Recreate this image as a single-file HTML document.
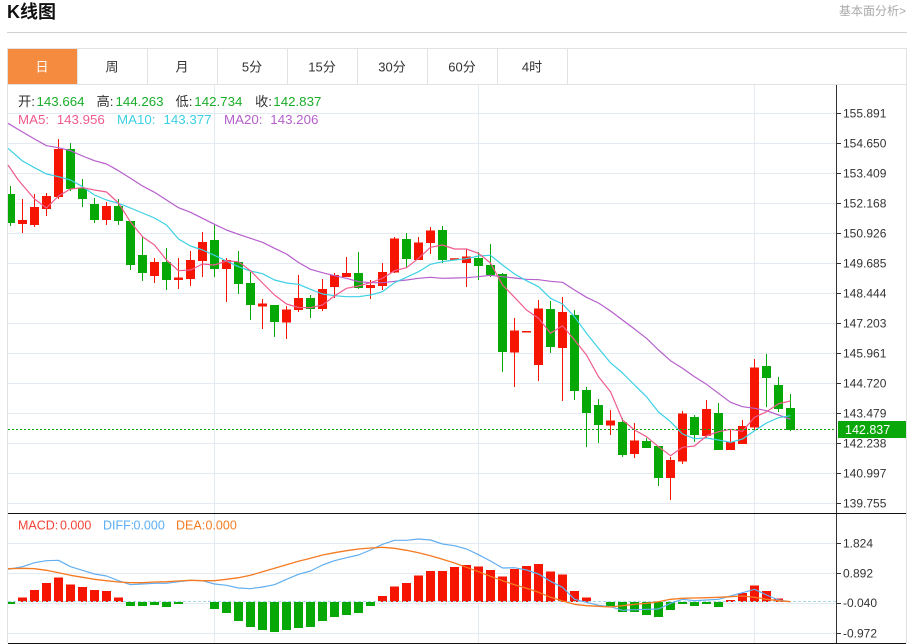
<!DOCTYPE html>
<html lang="zh">
<head>
<meta charset="utf-8">
<title>K线图</title>
<style>
html,body{margin:0;padding:0;background:#fff;width:913px;height:644px;overflow:hidden}
svg{display:block;font-family:"Liberation Sans","Noto Sans CJK SC",sans-serif}
</style>
</head>
<body>
<svg width="913" height="644" viewBox="0 0 913 644" xmlns="http://www.w3.org/2000/svg">
<!-- header -->
<text x="7" y="18" font-size="18" font-weight="700" fill="#111">K线图</text>
<text x="906" y="15" font-size="12" fill="#aaa" text-anchor="end">基本面分析&gt;</text>
<path d="M7 32.5H907" stroke="#d0d0d0" fill="none"/>
<!-- frame -->
<path d="M7.5 49V643M906.5 49V643M7 48.5H907M7 84.5H907" stroke="#e2e2e2" fill="none"/>
<rect x="8" y="49" width="69.5" height="35" fill="#f58b3f"/>
<path d="M77.5 49V84M147.5 49V84M217.5 49V84M287.5 49V84M357.5 49V84M427.5 49V84M497.5 49V84M567.5 49V84" stroke="#e2e2e2" fill="none"/>
<g font-size="13" text-anchor="middle" fill="#333">
<text x="42" y="71.500" fill="#fff">日</text>
<text x="112" y="71.500">周</text>
<text x="182" y="71.500">月</text>
<text x="252" y="71.500">5分</text>
<text x="322" y="71.500">15分</text>
<text x="392" y="71.500">30分</text>
<text x="462" y="71.500">60分</text>
<text x="532" y="71.500">4时</text>
</g>
<!-- grid -->
<path d="M8 113.5H836M8 143.5H836M8 173.5H836M8 203.5H836M8 233.5H836M8 263.5H836M8 293.5H836M8 323.5H836M8 353.5H836M8 383.5H836M8 413.5H836M8 443.5H836M8 473.5H836M8 503.5H836M8 543.5H836M8 573.5H836M8 603.5H836M8 633.5H836M214.5 85V643M478.5 85V643M754.5 85V643" stroke="#e3eaf2" fill="none"/>
<!-- candles green -->
<path d="M10.5 186V226M70.5 143V191M82.5 179V207M94.5 198V223M118.5 199V225M130.5 221V270M142.5 237V281M166.5 248V290M214.5 225V277M238.5 251V294M250.5 272V320M274.5 305V337M310.5 295V318M358.5 252V289M406.5 233V267M442.5 226V263M478.5 252V280M490.5 244V277M502.5 273V372M550.5 301V353M574.5 310V400M586.5 387V447M598.5 399V443M622.5 418V457M646.5 438V448M658.5 446V486M694.5 415V442M718.5 403V450M766.5 354V407M778.5 377V412M790.5 394V431" stroke="#06a806" fill="none"/>
<path fill="#06a806" d="M8 194h7v29h-7zM66 149h9v40h-9zM78 188h9v11h-9zM90 204h9v16h-9zM114 206h9v15h-9zM126 221h9v44h-9zM138 255h9v18h-9zM162 262h9v18h-9zM210 240h9v29h-9zM234 262h9v22h-9zM246 283h9v22h-9zM270 305h9v17h-9zM306 298h9v11h-9zM354 273h9v15h-9zM402 239h9v20h-9zM438 230h9v30h-9zM474 258h9v8h-9zM486 265h9v10h-9zM498 274h9v78h-9zM546 309h9v38h-9zM570 315h9v76h-9zM582 390h9v23h-9zM594 405h9v20h-9zM618 422h9v33h-9zM642 441h9v7h-9zM654 446h9v32h-9zM690 417h9v18h-9zM714 413h9v37h-9zM762 366h9v12h-9zM774 385h9v24h-9zM786 408h9v22h-9z"/>
<!-- candles red -->
<path d="M22.5 199V233M34.5 194V227M46.5 193V216M58.5 139V199M106.5 202V225M154.5 258V283M178.5 258V289M190.5 251V286M202.5 232V277M226.5 258V302M262.5 299V329M286.5 306V339M298.5 275V312M322.5 279V311M334.5 273V298M346.5 257V277M370.5 280V299M382.5 263V290M394.5 237V273M418.5 237V260M430.5 227V254M466.5 249V287M514.5 318V387M538.5 300V381M562.5 297V401M610.5 410V435M634.5 423V458M670.5 457V500M682.5 411V464M706.5 400V438M730.5 430V450M742.5 420V444M754.5 359V431" stroke="#f51500" fill="none"/>
<path fill="#f51500" d="M18 220h9v4h-9zM30 207h9v18h-9zM42 196h9v13h-9zM54 149h9v48h-9zM102 206h9v14h-9zM150 262h9v14h-9zM174 277.500h9v2.500h-9zM186 260h9v19h-9zM198 242h9v19h-9zM222 260h9v9h-9zM258 303.500h9v3h-9zM282 309.500h9v13h-9zM294 298h9v12h-9zM318 289h9v20h-9zM330 275h9v12h-9zM342 273h9v4h-9zM366 285h9v3h-9zM378 272h9v14h-9zM390 238.500h9v34h-9zM414 242.500h9v17.500h-9zM426 230.500h9v12.500h-9zM450 258.300h9v1.500h-9zM462 256.500h9v6.500h-9zM510 330.500h9v22h-9zM522 331h9v1.500h-9zM534 308.500h9v56.500h-9zM558 312h9v36h-9zM606 420.500h9v5h-9zM630 440.500h9v13.500h-9zM666 460h9v18h-9zM678 413.500h9v48h-9zM702 409h9v27h-9zM726 442h9v8h-9zM738 426h9v18h-9zM750 367.500h9v60h-9z"/>
<!-- moving averages -->
<g fill="none" stroke-width="1.200" stroke-linejoin="round">
<polyline stroke="#b65fcc" points="8,123.300 22.500,132 34.500,139 46.500,145.700 58.500,147.700 70.500,150.700 82.500,156 94.500,160.700 106.500,164 118.500,170.700 130.500,178.300 142.500,186 154.500,192.300 166.500,200 178.500,207.700 190.500,212.300 202.500,218.300 214.500,224.300 226.500,230 238.500,234.300 250.500,238.300 262.500,242.300 274.500,248.300 286.500,254 298.500,262.500 310.500,269.300 322.500,272.700 334.500,275.700 346.500,278.300 358.500,281.700 370.500,282.700 382.500,282.700 394.500,281.300 406.500,280 418.500,278.300 430.500,277.300 442.500,278.300 454.500,278 466.500,277.700 478.500,276.700 490.500,275.300 502.500,276.700 514.500,278 526.500,279.300 538.500,279.700 550.500,281.300 562.500,282.300 574.500,290 586.500,297.300 598.500,303 610.500,311 622.500,320 634.500,329 646.500,338.300 658.500,350 670.500,360.700 682.500,368.300 694.500,376.700 706.500,384.300 718.500,393.300 730.500,402.300 742.500,406.700 754.500,408.300 766.500,410.700 778.500,415 790.500,419.300"/>
<polyline stroke="#3cd0e4" points="8,148.300 22.500,161 34.500,167.700 46.500,174 58.500,176.700 70.500,180 82.500,186.700 94.500,195 106.500,200 118.500,203.300 130.500,208 142.500,213 154.500,218 166.500,225 178.500,239 190.500,246 202.500,250 214.500,255.300 226.500,261 238.500,266.700 250.500,271 262.500,273.700 274.500,280 286.500,283 298.500,284.300 310.500,289.300 322.500,294 334.500,295.700 346.500,296.700 358.500,296.700 370.500,295 382.500,291.700 394.500,282.700 406.500,277.300 418.500,271.700 430.500,264.300 442.500,261.700 454.500,260 466.500,258.700 478.500,256 490.500,255.300 502.500,265 514.500,274 526.500,280.700 538.500,286.700 550.500,298.300 562.500,304 574.500,316.700 586.500,333.300 598.500,348.300 610.500,362.700 622.500,373 634.500,385 646.500,396.700 658.500,412 670.500,421.700 682.500,434 694.500,438.700 706.500,438 718.500,440 730.500,442.300 742.500,439 754.500,430.700 766.500,423 778.500,417.700 790.500,415.700"/>
<polyline stroke="#ef5b8e" points="8,165 18.300,180 22.500,185 34.500,199 46.500,208 58.500,196 70.500,189 82.500,187.700 94.500,190 106.500,192 118.500,203 130.500,222 142.500,236.700 154.500,245 166.500,260 178.500,270.700 190.500,270 202.500,264 214.500,265 226.500,261 238.500,261.700 250.500,270.700 262.500,283 274.500,295 286.500,304 298.500,307.500 310.500,307.700 322.500,305 334.500,296 346.500,288.300 358.500,286 370.500,282.700 382.500,278.300 394.500,270.700 406.500,267.700 418.500,258.300 430.500,247.300 442.500,245 454.500,249 466.500,249 478.500,253.300 490.500,263 502.500,285 514.500,297.300 526.500,310 538.500,318.300 550.500,333.300 562.500,325.700 574.500,340 586.500,355 598.500,376.700 610.500,391.700 622.500,420 634.500,430 646.500,436.700 658.500,446.700 670.500,455.700 682.500,447.300 694.500,446 706.500,436 718.500,431.700 730.500,429.300 742.500,431.300 754.500,417.300 766.500,411.700 778.500,403.700 790.500,401"/>
</g>
<!-- last price -->
<path d="M8 429.500H836" stroke="#0aa70a" stroke-dasharray="2 2" fill="none"/>
<!-- MACD bars green -->
<path fill="#06a806" d="M8 602h7v2h-7zM126 602h9v4h-9zM138 602h9v4h-9zM150 602h9v3h-9zM162 602h9v5h-9zM174 602h9v2h-9zM210 602h9v7h-9zM222 602h9v11h-9zM234 602h9v19h-9zM246 602h9v25h-9zM258 602h9v28h-9zM270 602h9v30h-9zM282 602h9v28h-9zM294 602h9v26h-9zM306 602h9v25h-9zM318 602h9v19h-9zM330 602h9v15h-9zM342 602h9v13h-9zM354 602h9v11h-9zM366 602h9v4h-9zM606 602h9v4h-9zM618 602h9v10h-9zM630 602h9v10h-9zM642 602h9v13h-9zM654 602h9v15h-9zM666 602h9v8h-9zM678 602h9v2h-9zM690 602h9v4h-9zM702 602h9v2h-9zM714 602h9v5h-9z"/>
<!-- MACD bars red -->
<path fill="#f51500" d="M18 597.500h9v4.500h-9zM30 590h9v12h-9zM42 583h9v19h-9zM54 577.500h9v24.500h-9zM66 584.500h9v17.500h-9zM78 587h9v15h-9zM90 590h9v12h-9zM102 591h9v11h-9zM114 597.500h9v4.500h-9zM378 596h9v6h-9zM390 586.500h9v15.500h-9zM402 583h9v19h-9zM414 575.500h9v26.500h-9zM426 571h9v31h-9zM438 571h9v31h-9zM450 567h9v35h-9zM462 565h9v37h-9zM474 566.500h9v35.500h-9zM486 570h9v32h-9zM498 576.500h9v25.500h-9zM510 569h9v33h-9zM522 566h9v36h-9zM534 564h9v38h-9zM546 571.500h9v30.500h-9zM558 574.500h9v27.500h-9zM570 591h9v11h-9zM582 597.500h9v4.500h-9zM726 600h9v2h-9zM738 593h9v9h-9zM750 585.500h9v16.500h-9zM762 591h9v11h-9zM774 598.500h9v3.500h-9z"/>
<path d="M8 601.500H836" stroke="#a8d8e8" stroke-dasharray="3 2" fill="none"/>
<g fill="none" stroke-width="1.200" stroke-linejoin="round">
<polyline stroke="#63aef0" points="8,569.300 22.500,566.700 34.500,562.700 46.500,560.700 58.500,560.300 70.500,566.700 82.500,570.300 94.500,574 106.500,576 118.500,580.700 130.500,584.700 142.500,584 154.500,583.300 166.500,583.300 178.500,581.700 190.500,580.300 202.500,580.700 214.500,584 226.500,585.300 238.500,588 250.500,588.700 262.500,587 274.500,584.700 286.500,579.300 298.500,574.300 310.500,571 322.500,565 334.500,560.700 346.500,557.700 358.500,555 370.500,550 382.500,544.300 394.500,540.300 406.500,540.300 418.500,539 430.500,540 442.500,544 454.500,545.700 466.500,549 478.500,554.700 490.500,561 502.500,568 514.500,567.700 526.500,570 538.500,574 550.500,581.300 562.500,587.300 574.500,599.300 586.500,602.300 598.500,605.300 610.500,606.700 622.500,610.300 634.500,609.700 646.500,609.300 658.500,609 670.500,603.300 682.500,599.300 694.500,600.700 706.500,600 718.500,599.300 730.500,596 742.500,592.700 754.500,589.300 766.500,595 778.500,600 790.500,601.700"/>
<polyline stroke="#f57a22" stroke-width="1.300" points="8,568.700 22.500,568.300 34.500,568.700 46.500,570.300 58.500,572.700 70.500,575.300 82.500,577.300 94.500,579.300 106.500,580.700 118.500,582 130.500,582.700 142.500,582.700 154.500,582 166.500,581.700 178.500,581 190.500,580.300 202.500,580.700 214.500,580.700 226.500,579.300 238.500,577.700 250.500,575.300 262.500,571.700 274.500,568.300 286.500,564.700 298.500,561.300 310.500,558.300 322.500,555 334.500,552.700 346.500,550.700 358.500,549 370.500,548 382.500,547.300 394.500,548.300 406.500,550.300 418.500,552.700 430.500,555.700 442.500,559.300 454.500,563 466.500,567.300 478.500,571.700 490.500,576.300 502.500,580.700 514.500,584.700 526.500,588.300 538.500,592.300 550.500,597.300 562.500,601 574.500,604.300 586.500,605.700 598.500,606.300 610.500,607 622.500,605.700 634.500,604.300 646.500,603.300 658.500,601.700 670.500,599.300 682.500,598.300 694.500,598 706.500,597.700 718.500,597.300 730.500,596.700 742.500,596 754.500,597.300 766.500,599.300 778.500,600.700 790.500,601.700"/>
</g>
<!-- axis and separators -->
<path d="M836.500 85V643" stroke="#333" fill="none"/>
<path d="M8 513.500H906M8 643.500H906" stroke="#111" fill="none"/>
<path d="M837 113.500h4M837 143.500h4M837 173.500h4M837 203.500h4M837 233.500h4M837 263.500h4M837 293.500h4M837 323.500h4M837 353.500h4M837 383.500h4M837 413.500h4M837 443.500h4M837 473.500h4M837 503.500h4M837 543.500h4M837 573.500h4M837 603.500h4M837 633.500h4" stroke="#333" fill="none"/>
<g font-size="12" fill="#333">
<text x="843" y="117.500">155.891</text>
<text x="843" y="147.500">154.650</text>
<text x="843" y="177.500">153.409</text>
<text x="843" y="207.500">152.168</text>
<text x="843" y="237.500">150.926</text>
<text x="843" y="267.500">149.685</text>
<text x="843" y="297.500">148.444</text>
<text x="843" y="327.500">147.203</text>
<text x="843" y="357.500">145.961</text>
<text x="843" y="387.500">144.720</text>
<text x="843" y="417.500">143.479</text>
<text x="843" y="447.500">142.238</text>
<text x="843" y="477.500">140.997</text>
<text x="843" y="507.500">139.755</text>
<text x="843" y="547.500">1.824</text>
<text x="843" y="577.500">0.892</text>
<text x="843" y="607">-0.040</text>
<text x="843" y="637.500">-0.972</text>
</g>
<rect x="838" y="421" width="68" height="17" fill="#0aa70a"/>
<text x="845" y="434" font-size="12.500" fill="#fff">142.837</text>
<!-- legends -->
<g font-size="13.300">
<text x="18" y="106" fill="#333">开:</text><text x="36.500" y="106" fill="#1aad2a">143.664</text>
<text x="96.500" y="106" fill="#333">高:</text><text x="115.500" y="106" fill="#1aad2a">144.263</text>
<text x="175.500" y="106" fill="#333">低:</text><text x="194.300" y="106" fill="#1aad2a">142.734</text>
<text x="255" y="106" fill="#333">收:</text><text x="273.300" y="106" fill="#1aad2a">142.837</text>
<text x="18" y="124" fill="#ef5b8e">MA5:</text><text x="56.700" y="124" fill="#ef5b8e">143.956</text>
<text x="117" y="124" fill="#3cd0e4">MA10:</text><text x="163.500" y="124" fill="#3cd0e4">143.377</text>
<text x="224" y="124" fill="#b65fcc">MA20:</text><text x="270.300" y="124" fill="#b65fcc">143.206</text>
</g>
<g font-size="12.500">
<text x="18" y="529.500" fill="#f44336">MACD:</text><text x="60" y="529.500" fill="#f44336">0.000</text>
<text x="103" y="529.500" fill="#5aaef5">DIFF:</text><text x="133.500" y="529.500" fill="#5aaef5">0.000</text>
<text x="176" y="529.500" fill="#f57a22">DEA:</text><text x="205.500" y="529.500" fill="#f57a22">0.000</text>
</g>
</svg>
</body>
</html>
